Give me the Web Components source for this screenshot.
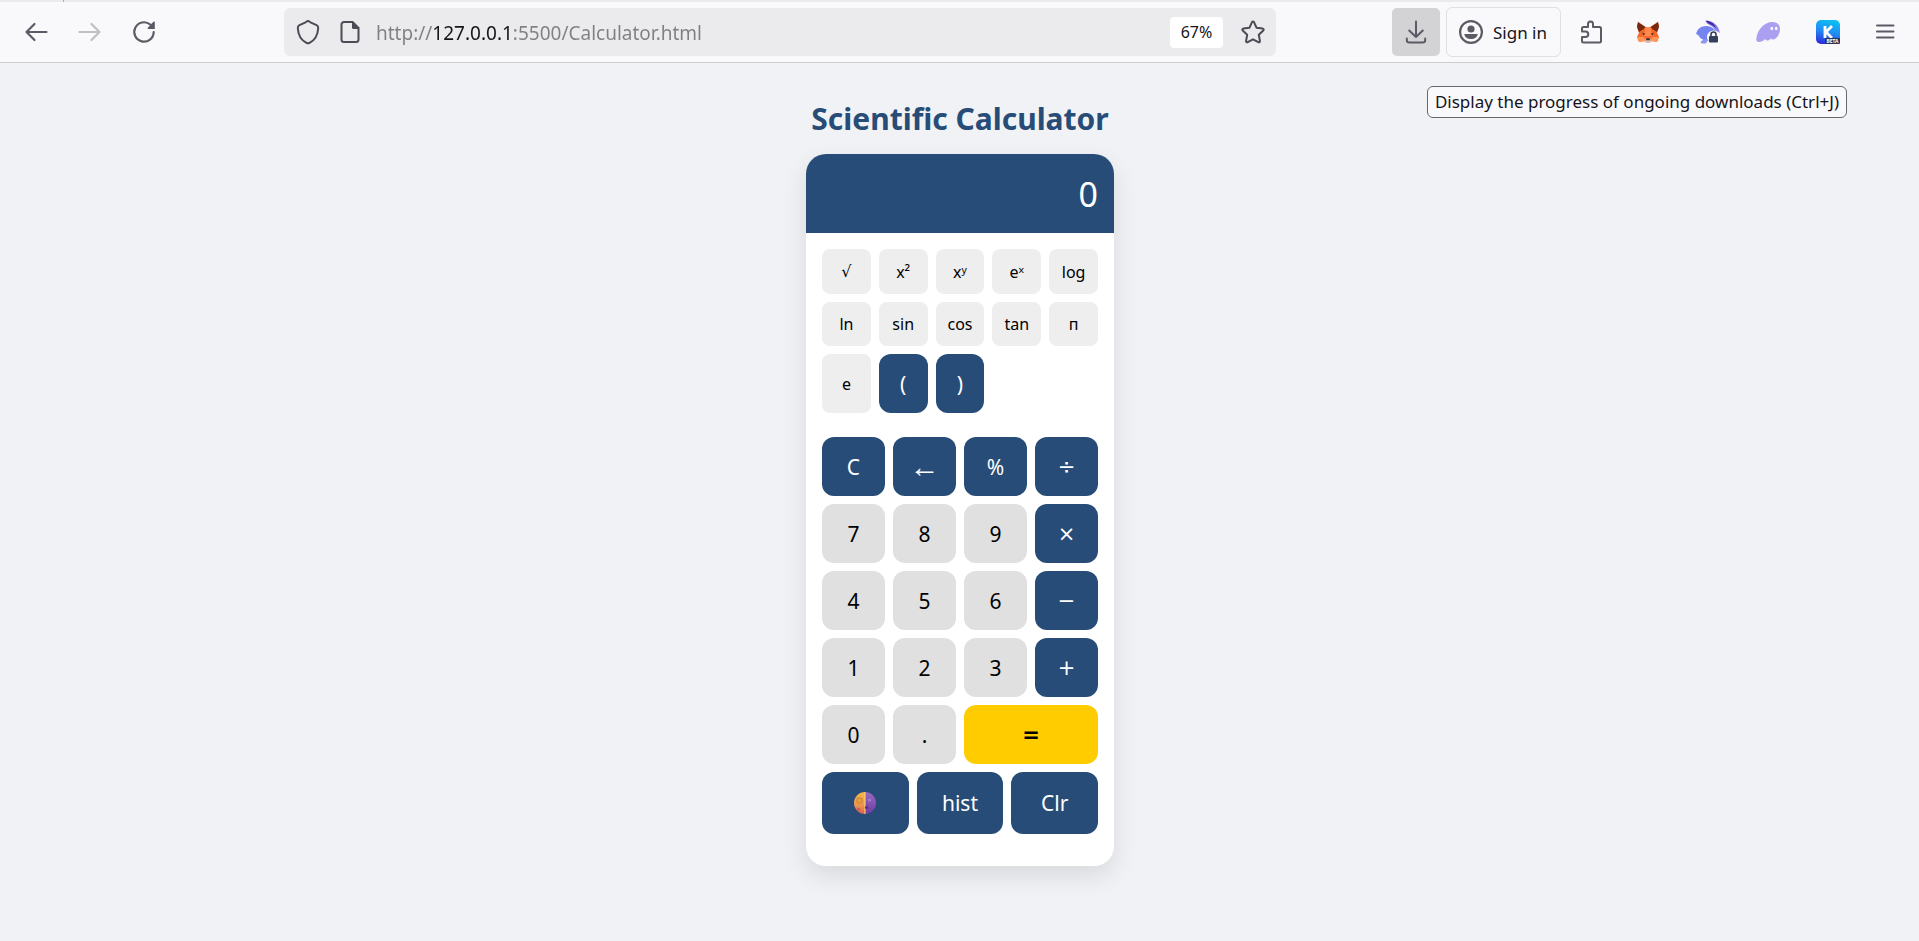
<!DOCTYPE html>
<html lang="en">
<head>
<meta charset="utf-8">
<title>Scientific Calculator</title>
<style>
html,body{margin:0;min-height:100%}
body{background:#f0f2f5;font-family:"Noto Sans","Open Sans",sans-serif;color:#15141a}
</style>
</head>
<body>
<browser-toolbar></browser-toolbar>
<sci-calculator heading="Scientific Calculator"></sci-calculator>

<script>
function define(name, html, setup) {
  const tpl = document.createElement('template');
  tpl.innerHTML = html;
  customElements.define(name, class extends HTMLElement {
    constructor() {
      super();
      this.attachShadow({mode: 'open'}).append(tpl.content.cloneNode(true));
    }
    connectedCallback() { if (setup) setup(this, this.shadowRoot); }
  });
}

/* Flat toolbar button: icon in the slot */
define('tool-button', `
<style>
:host{display:block;width:48px;height:48px;flex:none}
:host([wide]){width:54px}
:host([framed]){width:auto;height:50px}
button{box-sizing:border-box;width:100%;height:100%;border:0;border-radius:5px;background:none;padding:0;margin:0;
 display:flex;align-items:center;justify-content:center;gap:10px;color:#5b5b66;font:inherit;font-size:17px}
:host([active]) button{background:#d3d3d6}
:host([framed]) button{border:1px solid #e0e0e3;padding:0 13px 0 12px;border-radius:6px}
button:disabled{color:#bfbfc4}
</style>
<button type="button"><slot></slot></button>`, (host, root) => {
  const b = root.querySelector('button');
  b.disabled = host.hasAttribute('off');
  b.setAttribute('aria-label', host.getAttribute('label') || '');
});

define('address-bar', `
<style>
:host{display:flex;align-items:center;box-sizing:border-box;height:48px;padding:0 11px 0 12px;background:#ebebed;border-radius:6px;color:#4b4b55}
svg{display:block;flex:none}
.page{margin:0 16px 0 20px}
input{flex:1;min-width:0;border:0;outline:0;padding:2px 0 0;margin:0;height:32px;font:inherit;font-size:19px;
 color:transparent;-webkit-text-fill-color:transparent;
 background:linear-gradient(90deg,#7f7f84 57px,#15141a 57px,#15141a 137px,#7f7f84 137px);
 -webkit-background-clip:text;background-clip:text}
.zoom{height:31px;width:53px;border:0;border-radius:4px;background:#fff;padding:0;font:inherit;font-size:16px;color:#15141a;margin-right:18px}
</style>
<svg width="24" height="26" viewBox="0 0 24 26" fill="none" stroke="currentColor" stroke-width="2" stroke-linejoin="round"><path d="M12 2 C13 2 13.5 2.8 15 3.7 L20.5 6.2 C22.3 7 22.3 7.5 22.2 9 C21.8 17 18.5 21.5 13.3 24 Q12 24.6 10.7 24 C5.5 21.500 2.200 17 1.800 9 C1.700 7.500 1.700 7 3.500 6.200 L9 3.700 C10.500 2.800 11 2 12 2Z"/></svg>
<svg class="page" width="20" height="24" viewBox="0 0 20 24"><path d="M12 2H4a2.500 2.500 0 0 0-2.500 2.500v15A2.500 2.500 0 0 0 4 22h12a2.500 2.500 0 0 0 2.500-2.500V9" fill="none" stroke="currentColor" stroke-width="2"/><path d="M12 1h1l6.500 6.500V9H13.500A1.500 1.500 0 0 1 12 7.500Z" fill="currentColor"/></svg>
<input type="text" aria-label="Address" value="http://127.0.0.1:5500/Calculator.html" spellcheck="false">
<button class="zoom" type="button">67%</button>
<svg width="24" height="24" viewBox="0 0 24 24" fill="none" stroke="currentColor" stroke-width="2" stroke-linejoin="round"><path d="M11 2.200q1-1.400 2 0l2.600 5.600 6.100.8q1.600.5.600 1.900l-4.500 4.300 1.100 6.100q0 1.800-1.600 1.300L12 19.300l-5.300 2.900q-1.600.5-1.600-1.300l1.100-6.100-4.500-4.300q-1-1.400.600-1.900l6.100-.8Z"/></svg>`);

define('tool-tip', `
<style>
:host{display:block;box-sizing:border-box;height:32px;padding:0 7px;border:1px solid #67676c;border-radius:6px;background:#f9f9fb;
 font-size:17px;line-height:30px;color:#15141a;white-space:nowrap}
</style><slot></slot>`);

define('browser-toolbar', `
<style>
:host{display:block;position:relative;box-sizing:border-box;height:63px;border-top:2px solid #ebebed;border-bottom:1px solid #ccccd0;background:#f9f9fb}
nav{display:flex;align-items:center;gap:6px;height:60px;padding:0 10px 0 12px}
.tab{position:absolute;top:-2px;left:63px;width:1px;height:2px;background:#aaaab0}
address-bar{flex:1;min-width:0;margin:0 110px}
tool-tip{position:absolute;top:84px;right:72px}
svg{display:block;flex:none}
.label{color:#15141a}
</style>
<span class="tab"></span>
<nav aria-label="Browser">
<tool-button label="Back"><svg width="24" height="24" viewBox="0 0 24 24" fill="none" stroke="currentColor" stroke-width="2.200" stroke-linecap="round" stroke-linejoin="round"><path d="M22.500 12H2.500M10.500 4l-8 8 8 8"/></svg></tool-button>
<tool-button label="Forward" off><svg width="24" height="24" viewBox="0 0 24 24" fill="none" stroke="currentColor" stroke-width="2.200" stroke-linecap="round" stroke-linejoin="round"><path d="M1.500 12h20M13.500 4l8 8-8 8"/></svg></tool-button>
<tool-button label="Reload"><svg width="24" height="24" viewBox="0 0 24 24"><path d="M18.200 4.500A9.700 9.700 0 1 0 21.700 12" fill="none" stroke="currentColor" stroke-width="2.200" stroke-linecap="round"/><path d="M21.400 1.800Q22.800 1 22.800 2.500V8.500Q22.800 9 22.300 9H16.200Q14.900 8.800 15.800 7.700Z" fill="currentColor"/></svg></tool-button>
<address-bar></address-bar>
<tool-button label="Downloads" active><svg width="24" height="24" viewBox="0 0 24 24" fill="none" stroke="currentColor" stroke-width="2" stroke-linecap="round" stroke-linejoin="round"><path d="M12 1.500V17M5.200 10.500 12 17l6.800-6.500M2.800 18.500v1.500q0 2.500 2.500 2.500h13.400q2.500 0 2.500-2.500v-1.500"/></svg></tool-button>
<tool-button label="Sign in" framed><svg width="24" height="24" viewBox="0 0 24 24"><circle cx="12" cy="12" r="10.900" fill="none" stroke="currentColor" stroke-width="2.200"/><circle cx="12" cy="9" r="3.600" fill="currentColor"/><path d="M5.300 14h13.400C18.500 17 15.500 19 12 19S5.500 17 5.300 14Z" fill="currentColor"/></svg><span class="label">Sign in</span></tool-button>
<tool-button label="Extensions"><svg width="24" height="24" viewBox="0 0 24 24" fill="none" stroke="currentColor" stroke-width="2" stroke-linejoin="round"><path d="M4.500 22.500Q3 22.500 3 21V17H6.500a2.700 2.700 0 0 0 0-5.500H3V8.500Q3 7 4.500 7H9V4a2.500 2.500 0 0 1 5 0V7h6.500Q22 7 22 8.500V21q0 1.500-1.500 1.500Z"/></svg></tool-button>
<tool-button label="Wallet" wide><svg width="24" height="24" viewBox="0 0 24 24"><path d="M2 2 9.500 7h5L22 2l1 5-2 6 2 4-2 5-5-1-2 1.500h-4L8 21l-5 1-2-5 2-4L1 7Z" fill="#f5672a"/><path d="M2 2 9.500 7 7 9.500 3 12 1 7ZM22 2l-7.500 5L17 9.500l4 2.500 2-5Z" fill="#75290f"/><path d="M9.500 7h5l1.500 9h-8Z" fill="#ff8a4b"/><path d="M6 12.500 9.500 14l-2 1ZM18 12.500 14.500 14l2 1Z" fill="#3a2025"/><path d="M1 17h7l1 4-6 1ZM23 17h-7l-1 4 6 1Z" fill="#ff9656"/><path d="M9.500 18.500h5l.5 3-1 1h-4l-1-1Z" fill="#d9c4b8"/><path d="M10.200 18.300h3.600v2h-3.600Z" fill="#2d2530"/></svg></tool-button>
<tool-button label="Private wallet" wide><svg width="24" height="24" viewBox="0 0 24 24"><path d="M9.500.5C16 0 23 5 23.800 13L19 10C17 5 10 5 9.500.5Z" fill="#8a80e8"/><path d="M10 .7C15 1 19 4 20 8 16 4 12 4.500 10 .7Z" fill="#4a25a8"/><path d="M2 9.500C6 5 14 5 18 9c5 4 4 10-2 11.500C10 22 4 19 3 16l-3-2.500Z" fill="#7585ef"/><path d="M6 20.500 13 18l-3 5.500H5.500Q3.800 22 6 20.500Z" fill="#8d98f2"/><circle cx="17.500" cy="17" r="6.500" fill="#f9f9fb"/><rect x="13" y="16" width="9" height="6.500" rx="1" fill="#35415c"/><path d="M15 16v-1.500a2.500 2.500 0 0 1 5 0V16" fill="none" stroke="#35415c" stroke-width="1.600"/></svg></tool-button>
<tool-button label="Ghost wallet" wide><svg width="24" height="24" viewBox="0 0 24 24"><path d="M.3 19C1 10 8 2 16.500 2 22 2 24.500 6 24 10c-.6 5-4 9.500-7 9.500-1.500 0-1.800-.8-1.800-1.600-1.200 1.800-2.700 2.600-4.200 2.600-1.200 0-1.900-.6-1.900-1.700C7.500 21 5 22 3 22 1 22 .2 21 .3 19Z" fill="#ab9ff2"/><ellipse cx="15.800" cy="8.500" rx="1.300" ry="1.700" fill="#fff"/><ellipse cx="20.200" cy="8.500" rx="1.300" ry="1.700" fill="#fff"/></svg></tool-button>
<tool-button label="K wallet beta" wide><svg width="24" height="24" viewBox="0 0 24 24"><defs><linearGradient id="k" x1=".6" y1="0" x2=".35" y2="1"><stop offset="0" stop-color="#0cc0f2"/><stop offset=".5" stop-color="#218bf5"/><stop offset="1" stop-color="#2d2fd8"/></linearGradient></defs><rect width="24" height="24" rx="5" fill="url(#k)"/><path d="M9 6v12M16 6l-6 6 6 6" fill="none" stroke="#fff" stroke-width="2.800"/><rect x="9" y="18" width="15" height="6" rx="1" fill="#2a3550"/><text x="16.500" y="23" text-anchor="middle" font-family="Noto Sans, sans-serif" font-weight="700" font-size="5" fill="#fff">BETA</text></svg></tool-button>
<tool-button label="Menu"><svg width="24" height="24" viewBox="0 0 24 24" fill="none" stroke="currentColor" stroke-width="2" stroke-linecap="round"><path d="M4 5.500h16.500M4 11.500h16.500M4 17.500h16.500"/></svg></tool-button>
</nav>
<tool-tip role="tooltip">Display the progress of ongoing downloads (Ctrl+J)</tool-tip>`);

/* One calculator key; kind = number (default) | sci | op | equals.
   "math" picks the font with the wide operator signs. */
define('calc-key', `
<style>
:host{display:block;min-width:0}
:host([kind=equals]){grid-column:span 2}
button{display:flex;align-items:center;justify-content:center;width:100%;height:100%;box-sizing:border-box;border:0;margin:0;padding:0;
 border-radius:12px;background:#e0e0e0;color:#000;font:inherit;font-size:21px;line-height:28px;cursor:pointer}
:host([kind=sci]) button{background:#eee;border-radius:8px;font-size:16px}
:host([kind=op]) button{background:#274c77;color:#fff}
:host([kind=equals]) button{background:#fc0;font-weight:700}
:host([math]) button{font-family:"DejaVu Sans",sans-serif}
</style>
<button type="button"><slot></slot></button>`, (host, root) => {
  if (host.hasAttribute('label')) root.querySelector('button').setAttribute('aria-label', host.getAttribute('label'));
});

define('sci-calculator', `
<style>
:host{display:flex;flex-direction:column;align-items:center;padding:34px 16px 32px 17px}
h1{margin:0 0 14px;font-size:30px;line-height:43px;font-weight:700;color:#274c77;white-space:nowrap}
.card{width:308px;background:#fff;border-radius:20px;overflow:hidden;box-shadow:0 10px 26px rgba(0,0,0,.1)}
output{display:block;background:#274c77;color:#fff;font-size:34px;line-height:47px;padding:17px 16px 15px;text-align:right}
.keys{padding:16px 16px 32px;display:grid;gap:8px}
.sci,.num,.tools{display:grid;gap:8px}
.sci{grid-template-columns:repeat(5,1fr);grid-template-rows:45px 44px 59px;margin-bottom:16px}
.num{grid-template-columns:repeat(4,1fr);grid-auto-rows:59px}
.tools{grid-template-columns:repeat(3,1fr);grid-auto-rows:62px}
.arrow{font-family:"Liberation Serif",serif;font-size:30px}
svg{display:block}
</style>
<h1></h1>
<section class="card">
<output>0</output>
<div class="keys">
<div class="sci">
<calc-key kind="sci" math>√</calc-key><calc-key kind="sci">x²</calc-key><calc-key kind="sci">xʸ</calc-key><calc-key kind="sci">eˣ</calc-key><calc-key kind="sci">log</calc-key>
<calc-key kind="sci">ln</calc-key><calc-key kind="sci">sin</calc-key><calc-key kind="sci">cos</calc-key><calc-key kind="sci">tan</calc-key><calc-key kind="sci" label="pi">п</calc-key>
<calc-key kind="sci">e</calc-key><calc-key kind="op">(</calc-key><calc-key kind="op">)</calc-key>
</div>
<div class="num">
<calc-key kind="op">C</calc-key><calc-key kind="op" label="Backspace"><span class="arrow">←</span></calc-key><calc-key kind="op">%</calc-key><calc-key kind="op" math>÷</calc-key>
<calc-key>7</calc-key><calc-key>8</calc-key><calc-key>9</calc-key><calc-key kind="op" math>×</calc-key>
<calc-key>4</calc-key><calc-key>5</calc-key><calc-key>6</calc-key><calc-key kind="op" math>−</calc-key>
<calc-key>1</calc-key><calc-key>2</calc-key><calc-key>3</calc-key><calc-key kind="op" math>+</calc-key>
<calc-key>0</calc-key><calc-key>.</calc-key><calc-key kind="equals" math>=</calc-key>
</div>
<div class="tools">
<calc-key kind="op" label="Toggle theme"><svg width="24" height="24" viewBox="0 0 24 24"><defs><linearGradient id="o" x1="0" y1="0" x2="0" y2="1"><stop offset="0" stop-color="#f5b84a"/><stop offset=".6" stop-color="#eb9650"/><stop offset="1" stop-color="#d9605a"/></linearGradient><linearGradient id="p" x1="0" y1="0" x2="0" y2="1"><stop offset="0" stop-color="#9a68c4"/><stop offset="1" stop-color="#6b3fa0"/></linearGradient></defs><path d="M12 1a11 11 0 0 0 0 22Z" fill="url(#o)"/><path d="M12 1a11 11 0 0 1 0 22Z" fill="url(#p)"/><path d="M11.500 1h1v22h-1Z" fill="#ffe06a"/><circle cx="6.500" cy="9.500" r="2.800" fill="#e8a03f" stroke="#c27a35" stroke-width=".9"/><circle cx="5.500" cy="18.500" r="1.800" fill="#d45a50"/><circle cx="16.500" cy="9" r="1.500" fill="#a97cd4"/><circle cx="13.500" cy="16.500" r="1.600" fill="#57308c"/></svg></calc-key><calc-key kind="op">hist</calc-key><calc-key kind="op">Clr</calc-key>
</div>
</div>
</section>`, (host, root) => {
  root.querySelector('h1').textContent = host.getAttribute('heading');
});
</script>
</body>
</html>
